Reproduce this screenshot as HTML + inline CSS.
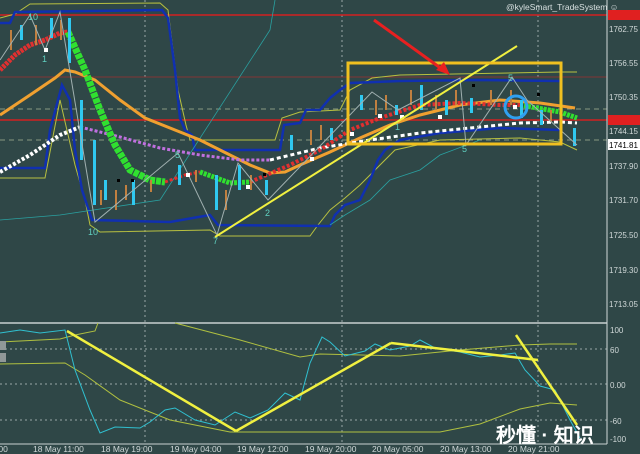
<!DOCTYPE html>
<html><head><meta charset="utf-8"><style>
html,body{margin:0;padding:0;background:#2f4747;width:640px;height:454px;overflow:hidden}
svg{display:block}
text{font-family:"Liberation Sans",sans-serif}
</style></head><body>
<svg width="640" height="454" viewBox="0 0 640 454" xmlns="http://www.w3.org/2000/svg">
<rect width="640" height="454" fill="#2f4747"/>
<g stroke="#c8d0d0" stroke-dasharray="2,3" stroke-width="1" opacity="0.7">
<line x1="145" y1="0" x2="145" y2="444"/><line x1="342" y1="0" x2="342" y2="444"/><line x1="538" y1="0" x2="538" y2="444"/>
<line x1="0" y1="349" x2="607" y2="349"/><line x1="0" y1="384" x2="607" y2="384"/><line x1="0" y1="420" x2="607" y2="420"/>
</g>
<g stroke="#8a9a80" stroke-dasharray="5,4" stroke-width="1">
<line x1="0" y1="109" x2="607" y2="109"/><line x1="0" y1="140" x2="607" y2="140"/>
</g>
<line x1="0" y1="15" x2="607" y2="15" stroke="#d42020" stroke-width="1.5"/>
<line x1="0" y1="120" x2="607" y2="120" stroke="#d42020" stroke-width="1.5"/>
<line x1="0" y1="77" x2="607" y2="77" stroke="#a03030" stroke-width="0.8"/>
<polyline fill="none" stroke="#b8c040" stroke-width="1" points="0,18 15,14 30,4 160,3 168,10 178,90 186,125 190,140 275,140 282,118 300,112 340,110 350,90 372,78 400,75 560,72 577,72"/>
<polyline fill="none" stroke="#b8c040" stroke-width="1" points="0,178 45,178 60,100 75,165 85,200 90,225 100,232 210,230 220,236 310,236 318,225 330,210 345,198 360,185 380,165 395,150 440,140 520,138 560,142 577,150"/>
<polyline fill="none" stroke="#1030b0" stroke-width="2.5" points="0,23 10,23 15,12 162,10 168,18 175,70 180,118 185,130 192,135 195,150 280,150 284,125 300,123 306,110 320,110 330,98 340,90 350,83 400,81 480,80 560,81"/>
<polyline fill="none" stroke="#1030b0" stroke-width="2.5" points="0,168 45,168 50,130 62,85 70,100 75,150 82,190 92,220 170,222 210,215 218,225 330,226 335,215 345,205 360,200 370,180 378,160 385,150 400,140 440,133 500,128 560,130"/>
<polyline fill="none" stroke="#2aa0a0" stroke-width="0.8" points="0,220 60,215 160,200 270,30 275,0"/>
<polyline fill="none" stroke="#2aa0a0" stroke-width="0.8" points="330,225 345,215 370,200 390,180 420,170 440,155 480,140"/>
<polyline fill="none" stroke="#f0a030" stroke-width="3" points="0,115 30,95 55,78 65,70 75,72 95,80 120,100 145,118 175,130 200,140 220,150 250,165 270,173 285,172 300,165 330,152 360,138 390,125 420,115 460,105 500,100 540,103 575,108"/>
<polyline fill="none" stroke="#ffffff" stroke-width="4" stroke-dasharray="3,2" points="0,172 30,155 60,135 80,127"/>
<polyline fill="none" stroke="#c070e0" stroke-width="3" stroke-dasharray="3,2" points="80,127 120,137 160,148 200,155 240,160 270,160"/>
<polyline fill="none" stroke="#ffffff" stroke-width="3" stroke-dasharray="4,3" points="270,160 320,148 370,140 420,133 470,128 520,123 560,122 577,123"/>
<polyline fill="none" stroke="#e03030" stroke-width="5" stroke-dasharray="3,1" points="0,70 15,55 30,45 45,40 60,33 68,32"/>
<polyline fill="none" stroke="#30e030" stroke-width="7" stroke-dasharray="5,1" points="68,32 85,70 100,110 115,145 130,170 150,180 165,182"/>
<polyline fill="none" stroke="#e03030" stroke-width="3" stroke-dasharray="3,2" points="165,182 185,175 200,172"/>
<polyline fill="none" stroke="#30e030" stroke-width="5" stroke-dasharray="3,1" points="200,172 230,183 250,182"/>
<polyline fill="none" stroke="#e03030" stroke-width="4" stroke-dasharray="3,2" points="250,182 290,165 320,150 350,130 380,118 420,105 460,103 500,105 520,105"/>
<polyline fill="none" stroke="#30e030" stroke-width="5" stroke-dasharray="3,1" points="520,105 560,112 577,118"/>
<g fill="#30c8f0">
<rect x="20" y="25" width="3" height="15"/><rect x="50" y="18" width="3" height="20"/><rect x="68" y="18" width="3" height="45"/><rect x="80" y="100" width="3" height="60"/><rect x="93" y="140" width="3" height="65"/><rect x="104" y="180" width="3" height="20"/><rect x="132" y="180" width="3" height="25"/><rect x="178" y="165" width="3" height="20"/><rect x="215" y="175" width="3" height="35"/><rect x="238" y="165" width="3" height="25"/><rect x="265" y="180" width="3" height="15"/><rect x="290" y="135" width="3" height="15"/><rect x="330" y="128" width="3" height="12"/><rect x="360" y="95" width="3" height="15"/><rect x="395" y="105" width="3" height="10"/><rect x="420" y="85" width="3" height="25"/><rect x="445" y="100" width="3" height="15"/><rect x="470" y="98" width="3" height="15"/><rect x="520" y="100" width="3" height="18"/><rect x="540" y="110" width="3" height="15"/><rect x="573" y="128" width="3" height="18"/>
</g>
<g fill="#c08040">
<rect x="10" y="30" width="2" height="20"/><rect x="35" y="25" width="2" height="20"/><rect x="60" y="20" width="2" height="20"/><rect x="100" y="190" width="2" height="15"/><rect x="115" y="190" width="2" height="20"/><rect x="125" y="185" width="2" height="15"/><rect x="150" y="180" width="2" height="12"/><rect x="195" y="170" width="2" height="12"/><rect x="225" y="190" width="2" height="20"/><rect x="250" y="175" width="2" height="15"/><rect x="310" y="130" width="2" height="15"/><rect x="320" y="125" width="2" height="15"/><rect x="375" y="100" width="2" height="15"/><rect x="385" y="95" width="2" height="15"/><rect x="410" y="90" width="2" height="15"/><rect x="435" y="95" width="2" height="15"/><rect x="455" y="90" width="2" height="15"/><rect x="490" y="90" width="2" height="15"/><rect x="510" y="90" width="2" height="15"/><rect x="550" y="110" width="2" height="12"/>
</g>
<polyline fill="none" stroke="#a0b0b0" stroke-width="1" points="0,60 30,15 45,50 60,12 95,222 178,153 217,235 238,163 268,200 372,92 398,110 460,78 466,145 512,77 527,100 577,145"/>
<g fill="#fff"><rect x="44" y="48" width="4" height="4"/><rect x="186" y="173" width="4" height="4"/><rect x="246" y="185" width="4" height="4"/><rect x="310" y="157" width="4" height="4"/><rect x="378" y="114" width="4" height="4"/><rect x="400" y="115" width="4" height="4"/><rect x="438" y="115" width="4" height="4"/><rect x="350" y="132" width="4" height="4"/><rect x="513" y="105" width="4" height="4"/></g>
<g fill="#000"><rect x="117" y="179" width="3" height="3"/><rect x="131" y="179" width="3" height="3"/><rect x="263" y="173" width="3" height="3"/><rect x="472" y="84" width="3" height="3"/><rect x="537" y="93" width="3" height="3"/></g>
<g fill="#60d0c0" font-size="9"><text x="42" y="62">1</text><text x="28" y="20">10</text><text x="88" y="235">10</text><text x="213" y="244">7</text><text x="265" y="216">2</text><text x="175" y="158">5</text><text x="395" y="130">1</text><text x="462" y="152">5</text><text x="508" y="81">5</text></g>
<line x1="215" y1="237" x2="517" y2="46" stroke="#f0f040" stroke-width="2"/>
<rect x="348" y="63" width="213" height="81" fill="none" stroke="#f0c020" stroke-width="3"/>
<line x1="374" y1="20" x2="446" y2="72" stroke="#e82020" stroke-width="3"/>
<polygon points="450,75 436,70 444,62" fill="#e82020"/>
<circle cx="516" cy="107" r="11" fill="none" stroke="#30a0f0" stroke-width="3"/>
<line x1="0" y1="323" x2="607" y2="323" stroke="#c8d0d0" stroke-width="1.5"/>
<line x1="0" y1="444" x2="607" y2="444" stroke="#c8d0d0" stroke-width="1"/>
<polyline fill="none" stroke="#b0c040" stroke-width="1" points="0,342 60,339 75,335 95,331 98,323"/>
<polyline fill="none" stroke="#b0c040" stroke-width="1" points="175,323 240,340 300,357 320,354 400,356 460,350 520,345 550,344 577,344"/>
<polyline fill="none" stroke="#b0c040" stroke-width="1" points="0,364 65,363 85,375 120,400 170,420 230,432 280,432 440,432 480,424 520,409 550,403 577,405"/>
<polyline fill="none" stroke="#30c0d0" stroke-width="1" points="0,333 20,330 40,333 65,330 75,370 90,410 100,433 115,427 140,428 150,422 165,410 175,408 195,420 215,425 235,412 250,418 268,410 285,393 300,400 310,363 322,337 330,342 345,356 365,351 375,344 390,350 410,346 420,340 435,348 460,352 480,357 500,355 515,353 525,370 540,386 555,390 570,420 580,438"/>
<line x1="67" y1="331" x2="236" y2="431" stroke="#f0f040" stroke-width="2.5"/>
<line x1="236" y1="431" x2="391" y2="343" stroke="#f0f040" stroke-width="2.5"/>
<line x1="391" y1="343" x2="538" y2="360" stroke="#f0f040" stroke-width="2.5"/>
<line x1="516" y1="335" x2="577" y2="425" stroke="#f0f040" stroke-width="2.5"/>
<rect x="0" y="341" width="6" height="9" fill="#909898"/><rect x="0" y="353" width="6" height="9" fill="#909898"/>
<rect x="607" y="0" width="33" height="454" fill="#2f4747"/>
<line x1="607" y1="0" x2="607" y2="444" stroke="#d0d8d8" stroke-width="1"/>
<g fill="#d0d8d8" font-size="8">
<text x="609" y="32">1762.75</text><text x="609" y="66">1756.55</text><text x="609" y="100">1750.35</text><text x="609" y="134">1744.15</text><text x="609" y="169">1737.90</text><text x="609" y="203">1731.70</text><text x="609" y="238">1725.50</text><text x="609" y="273">1719.30</text><text x="609" y="307">1713.05</text>
<text x="610" y="333">100</text><text x="610" y="353">60</text><text x="610" y="388">0.00</text><text x="610" y="424">-60</text><text x="610" y="442">-100</text>
</g>
<rect x="608" y="10" width="32" height="10" fill="#e02020"/><rect x="608" y="115" width="32" height="10" fill="#e02020"/>
<rect x="608" y="139" width="32" height="11" fill="#fff"/><text x="609" y="148" font-size="8" fill="#000">1741.81</text>
<text x="506" y="10" font-size="8.5" fill="#d8e0e0">@kyleSmart_TradeSystem ☺</text>
<g fill="#d0d8d8" font-size="8.5">
<text x="-4" y="452">:00</text><text x="33" y="452">18 May 11:00</text><text x="101" y="452">18 May 19:00</text><text x="170" y="452">19 May 04:00</text><text x="237" y="452">19 May 12:00</text><text x="305" y="452">19 May 20:00</text><text x="372" y="452">20 May 05:00</text><text x="440" y="452">20 May 13:00</text><text x="508" y="452">20 May 21:00</text>
</g>
<text x="496" y="442" font-size="20" font-weight="bold" fill="#ffffff" font-family="'Noto Sans CJK SC',sans-serif">秒懂 · 知识</text>
</svg>
</body></html>
